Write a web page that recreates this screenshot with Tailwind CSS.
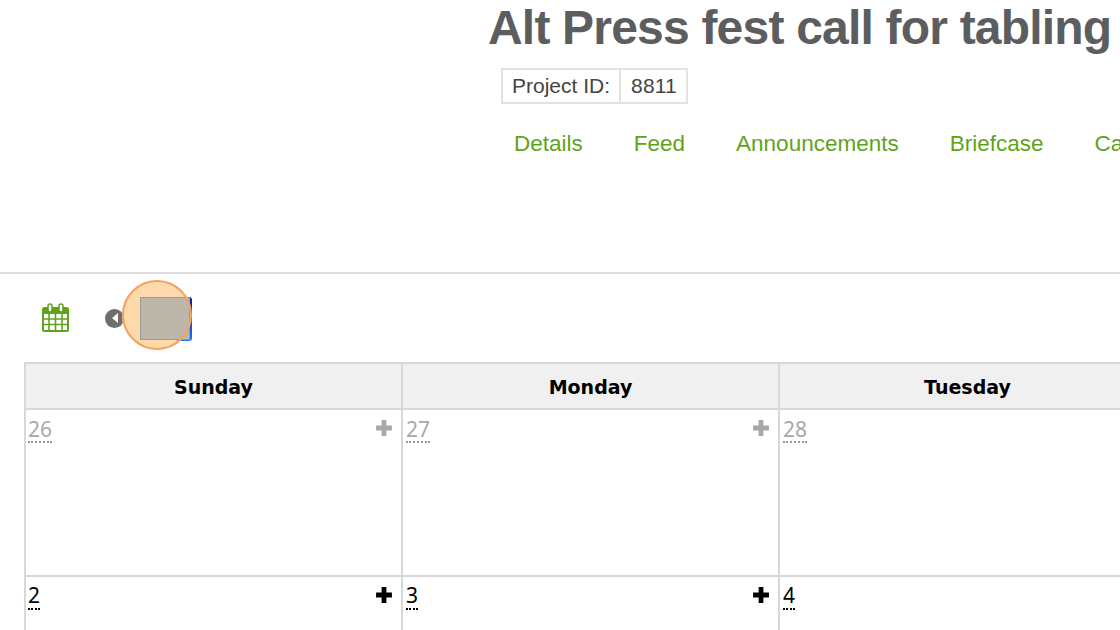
<!DOCTYPE html>
<html lang="en">
  <head>
    <meta charset="UTF-8" />
    <title>Alt Press fest call for tabling</title>
    <script src="https://cdn.jsdelivr.net/npm/@tailwindcss/browser@4"></script>
  </head>
  <body class="bg-white overflow-hidden">
    <div class="w-[1120px] h-[630px] overflow-hidden">
      <!-- header -->
      <div class="h-[274px] border-b-2 border-[#dddddd] pl-[488px] font-['Liberation_Sans',sans-serif]">
        <h1 class="h-[68px] pt-[1px] text-[48px] leading-[54px] font-bold tracking-[-0.8px] text-[#5c5d5f] whitespace-nowrap">Alt Press fest call for tabling</h1>
        <div class="ml-[13px] flex w-fit h-[36px] border-2 border-[#e2e2e2] text-[21px] leading-[32px] text-[#444444]">
          <div class="pl-[9px] pr-[9px] border-r-2 border-[#e2e2e2]">Project ID:</div>
          <div class="pl-[10px] pr-[9px] tracking-[0.2px]">8811</div>
        </div>
        <nav class="ml-[26px] mt-[24px] flex gap-[51px] text-[22.5px] leading-[32px] text-[#5fa319] whitespace-nowrap">
          <a>Details</a>
          <a>Feed</a>
          <a>Announcements</a>
          <a>Briefcase</a>
          <a>Calendar</a>
        </nav>
      </div>

      <!-- toolbar -->
      <div class="relative h-[88px] flex items-center pl-[42px]">
        <svg class="w-[27px] h-[29px] mb-[1px]" viewBox="0 0 27 29" fill="none">
          <rect x="1" y="5" width="25" height="23" rx="1.5" stroke="#5fa319" stroke-width="2" />
          <rect x="1" y="5" width="25" height="6" fill="#5fa319" />
          <path d="M1 16h25M1 21.5h25M7 11v17M13.5 11v17M20 11v17" stroke="#5fa319" stroke-width="1.6" />
          <rect x="6" y="1" width="4" height="8" rx="2" fill="#fff" stroke="#5fa319" stroke-width="1.5" />
          <rect x="17" y="1" width="4" height="8" rx="2" fill="#fff" stroke="#5fa319" stroke-width="1.5" />
        </svg>
        <div class="ml-[36px] w-[19px] h-[19px] rounded-full bg-[#6e6e6e] flex items-center justify-center">
          <svg class="w-[8px] h-[10px]" viewBox="0 0 8 10"><path d="M7 0v10L1 5z" fill="#fff" /></svg>
        </div>
        <!-- orange marker over the highlighted button -->
        <div class="absolute left-[122px] top-[6px] w-[70px] h-[70px] rounded-full bg-[#fdd9ac]"></div>
        <div class="absolute left-[176px] top-[23px] w-[16px] h-[44px] rounded-[3px] bg-linear-to-b from-[#0b1fa6] to-[#1c73f2]"></div>
        <div class="absolute left-[140px] top-[23px] w-[50px] h-[43px] bg-[#bdb6aa] border border-[#9a9a94]"></div>
        <div class="absolute left-[122px] top-[6px] w-[70px] h-[70px] rounded-full border-2 border-[#f4a460]"></div>
      </div>

      <!-- calendar -->
      <div class="ml-[24px] w-[1140px] border-t-2 border-l-2 border-[#d8d8d8] grid grid-cols-[377px_377px_377px] font-['DejaVu_Sans',sans-serif]">
        <div class="h-[46px] bg-[#f0f0f0] border-r-2 border-b-2 border-[#d8d8d8] text-center text-[19px] leading-[46px] font-bold text-black">Sunday</div>
        <div class="h-[46px] bg-[#f0f0f0] border-r-2 border-b-2 border-[#d8d8d8] text-center text-[19px] leading-[46px] font-bold text-black">Monday</div>
        <div class="h-[46px] bg-[#f0f0f0] border-r-2 border-b-2 border-[#d8d8d8] text-center text-[19px] leading-[46px] font-bold text-black">Tuesday</div>

        <div class="h-[167px] border-r-2 border-b-2 border-[#d8d8d8] flex justify-between items-start pl-[2px] pr-[8px] pt-[7px] font-['Noto_Sans',sans-serif] text-[21px] text-[#a8a8a8]">
          <span class="leading-[24px] border-b-2 border-dotted border-[#999999]">26</span>
          <svg class="w-[18px] h-[18px] mt-[2px]" viewBox="0 0 17 17"><path d="M8.5 1v15M1 8.5h15" stroke="currentColor" stroke-width="4.5" /></svg>
        </div>
        <div class="h-[167px] border-r-2 border-b-2 border-[#d8d8d8] flex justify-between items-start pl-[3px] pr-[8px] pt-[7px] font-['Noto_Sans',sans-serif] text-[21px] text-[#a8a8a8]">
          <span class="leading-[24px] border-b-2 border-dotted border-[#999999]">27</span>
          <svg class="w-[18px] h-[18px] mt-[2px]" viewBox="0 0 17 17"><path d="M8.5 1v15M1 8.5h15" stroke="currentColor" stroke-width="4.5" /></svg>
        </div>
        <div class="h-[167px] border-r-2 border-b-2 border-[#d8d8d8] flex justify-between items-start pl-[3px] pr-[8px] pt-[7px] font-['Noto_Sans',sans-serif] text-[21px] text-[#a8a8a8]">
          <span class="leading-[24px] border-b-2 border-dotted border-[#999999]">28</span>
        </div>

        <div class="h-[60px] border-r-2 border-[#d8d8d8] flex justify-between items-start pl-[2px] pr-[8px] pt-[6px] font-['Noto_Sans',sans-serif] text-[21px] text-black">
          <span class="leading-[25px] border-b-2 border-dotted border-black">2</span>
          <svg class="w-[18px] h-[18px] mt-[3px]" viewBox="0 0 17 17"><path d="M8.5 1v15M1 8.5h15" stroke="currentColor" stroke-width="4.5" /></svg>
        </div>
        <div class="h-[60px] border-r-2 border-[#d8d8d8] flex justify-between items-start pl-[3px] pr-[8px] pt-[6px] font-['Noto_Sans',sans-serif] text-[21px] text-black">
          <span class="leading-[25px] border-b-2 border-dotted border-black">3</span>
          <svg class="w-[18px] h-[18px] mt-[3px]" viewBox="0 0 17 17"><path d="M8.5 1v15M1 8.5h15" stroke="currentColor" stroke-width="4.5" /></svg>
        </div>
        <div class="h-[60px] border-r-2 border-[#d8d8d8] flex justify-between items-start pl-[3px] pr-[8px] pt-[6px] font-['Noto_Sans',sans-serif] text-[21px] text-black">
          <span class="leading-[25px] border-b-2 border-dotted border-black">4</span>
        </div>
      </div>
    </div>
  </body>
</html>
